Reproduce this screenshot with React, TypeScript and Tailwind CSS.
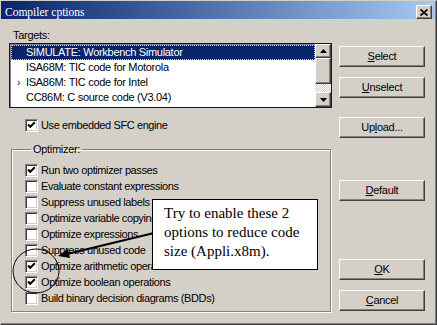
import React from "react";

const sans = "font-['Liberation_Sans',Arial,sans-serif]";
const serif = "font-['Liberation_Serif','Times_New_Roman',serif]";

const raised =
  "border border-t-white border-l-white border-r-[#404040] border-b-[#404040] shadow-[inset_-1px_-1px_#808080]";

function Box({ checked }: { checked?: boolean }) {
  return (
    <span className="w-[13px] h-[13px] shrink-0 bg-white border border-t-[#808080] border-l-[#808080] border-r-white border-b-white shadow-[inset_1px_1px_#404040,inset_-1px_-1px_#d4d0c8]">
      {checked && (
        <svg width="11" height="11" viewBox="0 0 11 11">
          <polyline points="2,4.5 4.3,6.8 8.8,2.3" fill="none" stroke="#000" strokeWidth="2" />
        </svg>
      )}
    </span>
  );
}

function Check({ label, checked }: { label: string; checked?: boolean }) {
  return (
    <div className="h-[16px] flex items-center gap-[3px]">
      <Box checked={checked} />
      <span className="text-[11px] leading-[13px] tracking-[-0.4px] text-black whitespace-nowrap">{label}</span>
    </div>
  );
}

function Btn({ pre = "", u, post, mt }: { pre?: string; u: string; post: string; mt: string }) {
  return (
    <button className={`${raised} ${mt} w-[86px] h-[21px] bg-[#d4d0c8] text-[11px] leading-[13px] tracking-[-0.3px] text-black flex items-center justify-center`}>
      {pre}
      <span className="underline underline-offset-[1px]">{u}</span>
      {post}
    </button>
  );
}

const targets = [
  { label: "SIMULATE: Workbench Simulator", sel: true },
  { label: "ISA68M: TIC code for Motorola" },
  { label: "ISA86M: TIC code for Intel", mark: true },
  { label: "CC86M: C source code (V3.04)" },
];

const options: [string, boolean][] = [
  ["Run two optimizer passes", true],
  ["Evaluate constant expressions", false],
  ["Suppress unused labels", false],
  ["Optimize variable copying", false],
  ["Optimize expressions", false],
  ["Suppress unused code", false],
  ["Optimize arithmetic operations", true],
  ["Optimize boolean operations", true],
  ["Build binary decision diagrams (BDDs)", false],
];

export default function App() {
  return (
    <div className={`${sans} relative w-[437px] h-[325px] bg-[#d4d0c8] border border-t-[#d4d0c8] border-l-[#d4d0c8] border-r-[#404040] border-b-[#404040] shadow-[inset_-1px_-1px_#808080] overflow-hidden`}>
      {/* title bar */}
      <div className="h-[18px] mr-[1px] bg-linear-to-r from-[#0a246a] to-[#a6caf0] flex justify-between">
        <span className={`${serif} text-white text-[11.5px] leading-[13px] pl-[4px] pt-[5px]`}>Compiler cptions</span>
        <span className={`${raised} bg-[#d4d0c8] w-[16px] h-[14px] mt-[4px] mr-[3px] flex items-center justify-center`}>
          <svg width="8" height="7" viewBox="0 0 8 7">
            <path d="M0.5 0.5 L7.5 6.5 M7.5 0.5 L0.5 6.5" stroke="#000" strokeWidth="1.8" />
          </svg>
        </span>
      </div>

      <div className="flex">
        {/* left column */}
        <div className="ml-[8px] w-[323px] flex flex-col">
          <div className="mt-[10px] pl-[4px] text-[11px] leading-[13px] tracking-[-0.3px]">Targets:</div>
          <div className="mt-[1px] h-[65px] bg-white border border-[#1a1a1a] shadow-[inset_1px_1px_#808080] flex">
            <div className="flex-1 pt-[1px] pl-[1px]">
              {targets.map((t) => (
                <div
                  key={t.label}
                  className={`h-[15px] flex items-center text-[11px] leading-[13px] tracking-[-0.3px] whitespace-nowrap ${
                    t.sel ? "bg-[#0a246a] text-white outline outline-dotted outline-[#e8e070] -outline-offset-1" : "text-black"
                  }`}
                >
                  <span className="w-[15px] pl-[6px] text-[10px]">{t.mark ? "›" : ""}</span>
                  {t.label}
                </div>
              ))}
            </div>
            <div className="w-[16px] flex flex-col bg-[#d4d0c8]">
              <span className={`${raised} h-[14px] bg-[#d4d0c8] flex items-center justify-center`}>
                <svg width="7" height="4" viewBox="0 0 7 4"><path d="M3.5 0 L7 4 L0 4Z" fill="#000" /></svg>
              </span>
              <span className={`${raised} h-[26px] bg-[#d4d0c8]`} />
              <span className="flex-1 bg-[repeating-conic-gradient(#fff_0%_25%,#d4d0c8_0%_50%)] bg-size-[2px_2px]" />
              <span className={`${raised} h-[15px] bg-[#d4d0c8] flex items-center justify-center`}>
                <svg width="7" height="4" viewBox="0 0 7 4"><path d="M0 0 L7 0 L3.5 4Z" fill="#000" /></svg>
              </span>
            </div>
          </div>

          <div className="mt-[9px] pl-[16px]">
            <Check label="Use embedded SFC engine" checked />
          </div>

          <fieldset className="mt-[10px] ml-[2px] w-[320px] h-[169px] border border-[#808080] shadow-[1px_1px_0_#fff,inset_1px_1px_0_#fff] pl-[13px] pt-[6px]">
            <legend className="ml-[6px] px-[2px] text-[11px] leading-[13px] tracking-[-0.3px]">Optimizer:</legend>
            {options.map(([l, c]) => (
              <Check key={l} label={l} checked={c} />
            ))}
          </fieldset>
        </div>

        {/* right column */}
        <div className="ml-[7px] flex flex-col">
          <Btn u="S" post="elect" mt="mt-[27px]" />
          <Btn u="U" post="nselect" mt="mt-[10px]" />
          <Btn pre="Up" u="l" post="oad..." mt="mt-[19px]" />
          <Btn u="D" post="efault" mt="mt-[42px]" />
          <Btn u="O" post="K" mt="mt-[58px]" />
          <Btn u="C" post="ancel" mt="mt-[10px]" />
        </div>
      </div>

      {/* annotation overlay */}
      <svg className="absolute left-0 top-0 pointer-events-none" width="437" height="325" viewBox="0 0 437 325">
        <ellipse cx="35" cy="270" rx="23" ry="22" fill="none" stroke="#000" strokeWidth="1" />
        <line x1="153" y1="232" x2="66" y2="253" stroke="#000" strokeWidth="2" />
        <path d="M57 255 L67 248 L69 257 Z" fill="#000" />
      </svg>
      <div className={`${serif} absolute left-[151px] top-[198px] w-[166px] h-[71px] bg-white border border-black pl-[11px] pt-[4px] text-[15px] leading-[19px] text-black`}>
        Try to enable these 2
        <br />
        options to reduce code
        <br />
        size (Appli.x8m).
      </div>
    </div>
  );
}
